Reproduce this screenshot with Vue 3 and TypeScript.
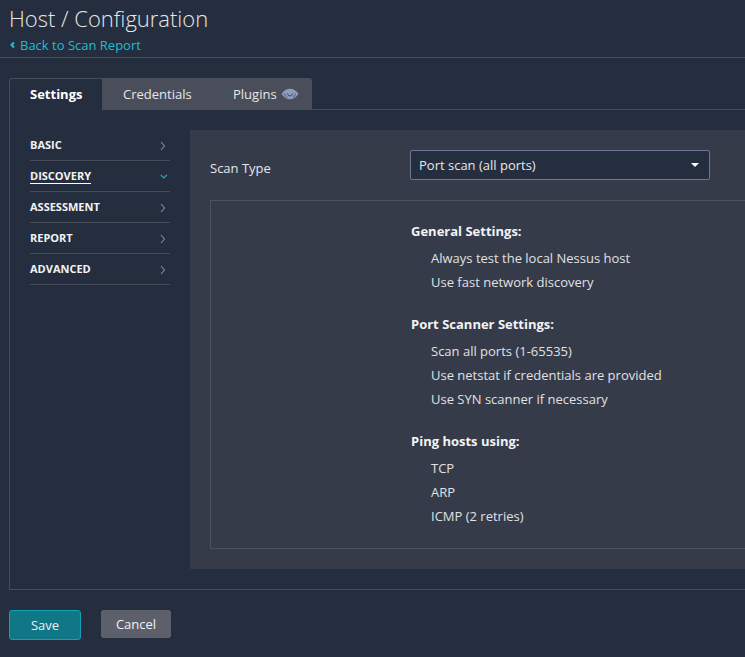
<script setup lang="ts">
const nav = [
  { label: 'BASIC', open: false },
  { label: 'DISCOVERY', open: true },
  { label: 'ASSESSMENT', open: false },
  { label: 'REPORT', open: false },
  { label: 'ADVANCED', open: false },
]
const groups = [
  { title: 'General Settings:', items: ['Always test the local Nessus host', 'Use fast network discovery'] },
  { title: 'Port Scanner Settings:', items: ['Scan all ports (1-65535)', 'Use netstat if credentials are provided', 'Use SYN scanner if necessary'] },
  { title: 'Ping hosts using:', items: ['TCP', 'ARP', 'ICMP (2 retries)'] },
]
</script>

<template>
  <div class="page">
    <header class="head">
      <h1 class="title">Host / Configuration</h1>
      <a class="back">
        <svg class="back-ic" width="5" height="8" viewBox="0 0 5 8"><path d="M4 1.500 1.500 4 4 6.500" fill="none" stroke="#1fc0d2" stroke-width="2" /></svg>
        Back to Scan Report
      </a>
    </header>

    <nav class="tabs">
      <div class="tab active">Settings</div>
      <div class="tab cred">Credentials</div>
      <div class="tab plug">
        Plugins
        <svg width="18" height="12" viewBox="0 0 18 12">
          <path d="M.5 6C3 2.4 5.800.8 9 .8s6 1.600 8.500 5.200C15 9.600 12.200 11.200 9 11.200S3 9.600.5 6Z" fill="#8e9cc0" />
          <path d="M3.500 5.500c.5 2 1.500 3.500 3 4.300M14.500 5.500c-.5 2-1.500 3.500-3 4.300" fill="none" stroke="#4a4e5a" stroke-width=".8" />
          <path d="M6.500 5.500a2.500 2.500 0 0 0 5 0" fill="none" stroke="#4a4e5a" stroke-width="1" />
        </svg>
      </div>
    </nav>

    <section class="panel">
      <aside class="side">
        <div v-for="n in nav" :key="n.label" class="nav-row">
          <span class="nav-label" :class="{ on: n.open }">{{ n.label }}</span>
          <span class="chev-slot">
            <svg v-if="n.open" width="8" height="6" viewBox="0 0 8 6"><path d="M.8 1 3.800 4 6.800 1" fill="none" stroke="#1fa9b8" stroke-width="1.200" /></svg>
            <svg v-else width="6" height="10" viewBox="0 0 6 10"><path d="M1 1 4.500 5 1 9" fill="none" stroke="#7f88a6" stroke-width="1.100" /></svg>
          </span>
        </div>
      </aside>

      <div class="content">
        <div class="scan-row">
          <label class="scan-label">Scan Type</label>
          <div class="select">
            <span>Port scan (all ports)</span>
            <span class="caret"></span>
          </div>
        </div>
        <div class="box">
          <div v-for="g in groups" :key="g.title" class="group">
            <div class="g-title">{{ g.title }}</div>
            <div v-for="i in g.items" :key="i" class="g-item">{{ i }}</div>
          </div>
        </div>
      </div>
    </section>

    <footer class="actions">
      <button class="btn save">Save</button>
      <button class="btn cancel">Cancel</button>
    </footer>
  </div>
</template>

<style>
html, body { margin: 0; background: #252e3e; overflow: hidden; }
</style>

<style scoped>
.page {
  width: 745px;
  height: 657px;
  overflow: hidden;
  background: #252e3e;
  color: #e6e7ea;
  font-family: "Open Sans", sans-serif;
  font-size: 13px;
}
.head {
  height: 57px;
  padding-left: 9px;
  border-bottom: 1px solid #474c59;
}
.title {
  margin: 0;
  padding-top: 3px;
  font-size: 22px;
  line-height: 30px;
  font-weight: 300;
  color: #e6e7ea;
}
.back {
  display: flex;
  align-items: center;
  gap: 5px;
  margin-top: 3px;
  padding-left: 1px;
  color: #1dbdd0;
  line-height: 18px;
}
.tabs {
  display: flex;
  margin: 20px 0 0 9px;
  height: 32px;
}
.tab {
  display: flex;
  align-items: center;
  box-sizing: border-box;
  background: #4a4e5a;
  color: #e6e7ea;
}
.active {
  width: 94px;
  padding: 0 0 3px 20px;
  font-weight: 700;
  color: #fff;
  background: #252e3e;
  border: 1px solid #474c59;
  border-bottom: 0;
  border-radius: 3px 0 0 0;
  position: relative;
  z-index: 1;
  height: 33px;
}
.cred {
  width: 109px;
  padding-left: 20px;
}
.plug {
  width: 100px;
  padding-left: 21px;
  gap: 4px;
  border-radius: 0 3px 0 0;
}
.panel {
  display: flex;
  height: 481px;
  margin-left: 9px;
  padding: 20px 0;
  box-sizing: border-box;
  border: 1px solid #474c59;
  border-right: 0;
  margin-top: -1px;
}
.side {
  width: 140px;
  margin-left: 20px;
  flex: none;
}
.nav-row {
  display: flex;
  align-items: center;
  justify-content: space-between;
  height: 30px;
  border-bottom: 1px solid #474c59;
}
.nav-label {
  font-size: 11px;
  font-weight: 700;
  color: #f2f3f5;
  line-height: 14px;
}
.nav-label.on {
  border-bottom: 1px solid #fff;
}
.chev-slot {
  width: 10px;
  flex: none;
  display: flex;
  margin-top: 2px;
}
.content {
  flex: 1;
  margin-left: 20px;
  padding: 20px 0 20px 20px;
  background: #353b49;
}
.scan-row {
  display: flex;
  align-items: center;
  height: 30px;
}
.scan-label {
  width: 200px;
  flex: none;
  color: #e6e7ea;
  padding-top: 6px;
}
.select {
  width: 300px;
  height: 30px;
  box-sizing: border-box;
  display: flex;
  align-items: center;
  justify-content: space-between;
  padding: 0 10px 0 8px;
  background: #252e3e;
  border: 1px solid #6e7896;
  border-radius: 2px;
}
.caret {
  width: 0;
  height: 0;
  border-left: 4.500px solid transparent;
  border-right: 4.500px solid transparent;
  border-top: 4.500px solid #fff;
}
.box {
  margin-top: 20px;
  height: 349px;
  box-sizing: border-box;
  border: 1px solid #4d5260;
  border-right: 0;
  padding: 20px 0 0 200px;
}
.group { margin-bottom: 20px; }
.g-title {
  font-weight: 700;
  line-height: 20px;
  margin-bottom: 5px;
  color: #f2f3f5;
}
.g-item {
  padding-left: 20px;
  line-height: 24px;
  color: #e0e1e5;
}
.actions {
  display: flex;
  align-items: flex-start;
  gap: 20px;
  margin: 20px 0 0 9px;
}
.btn {
  font-family: inherit;
  font-size: 13px;
  color: #f0f1f3;
  border-radius: 3px;
  padding: 0;
  box-sizing: border-box;
}
.save {
  width: 72px;
  height: 30px;
  background: #107787;
  border: 1px solid #0fa2b5;
}
.cancel {
  width: 70px;
  height: 28px;
  background: #5d5f6b;
  border: 0;
}
</style>
